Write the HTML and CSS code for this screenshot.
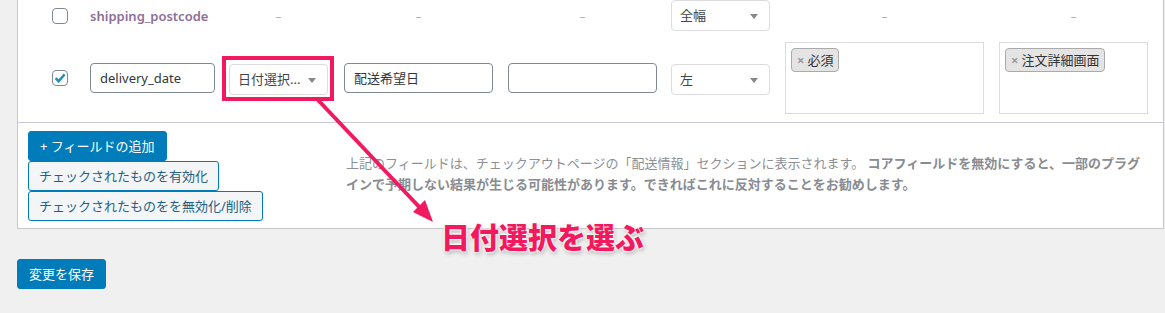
FILE: index.html
```html
<!DOCTYPE html>
<html lang="ja">
  <head>
    <meta charset="utf-8">
    <title>配送フィールド</title>
    <link rel="stylesheet" href="styles.css">
  </head>
  <body>

  <div class="wrap">
    <div class="panel">

      <div class="field-row first">
        <div class="cell-check"><span class="check"></span></div>
        <div class="cell"><span class="field-name">shipping_postcode</span></div>
        <div class="cell"><span class="dash w99">&ndash;</span></div>
        <div class="cell"><span class="dash w149">&ndash;</span></div>
        <div class="cell"><span class="dash w149">&ndash;</span></div>
        <div class="cell">
          <span class="select">全幅<i class="arrow"></i></span>
        </div>
        <div class="cell"><span class="dash w199">&ndash;</span></div>
        <div class="cell"><span class="dash w149">&ndash;</span></div>
      </div>

      <div class="field-row second">
        <div class="cell-check"><span class="check checked">
          <svg viewBox="0 0 16 16" width="16" height="16"><path d="M3.6 8.2 L6.6 11.2 L12.6 4.4" fill="none" stroke="#1e8cbe" stroke-width="2.4"/></svg>
        </span></div>
        <div class="cell"><span class="input w125">delivery_date</span></div>
        <div class="cell"><span class="select low">日付選択...<i class="arrow"></i></span></div>
        <div class="cell"><span class="input w149">配送希望日</span></div>
        <div class="cell"><span class="input w149"></span></div>
        <div class="cell"><span class="select low">左<i class="arrow"></i></span></div>
        <div class="cell">
          <div class="multi w199"><span class="tag"><b>&times;</b>必須</span></div>
        </div>
        <div class="cell">
          <div class="multi w149"><span class="tag"><b>&times;</b>注文詳細画面</span></div>
        </div>
      </div>

      <div class="panel-foot">
        <div class="actions">
          <span class="button primary">+ フィールドの追加</span>
          <span class="button">チェックされたものを有効化</span>
          <span class="button">チェックされたものをを無効化/削除</span>
        </div>
        <p class="note">上記のフィールドは、チェックアウトページの「配送情報」セクションに表示されます。 <strong>コアフィールドを無効にすると、一部のプラグ<br>インで予期しない結果が生じる可能性があります。できればこれに反対することをお勧めします。</strong></p>
      </div>

    </div>

    <span class="button primary save">変更を保存</span>
  </div>

  <!-- annotation -->
  <svg class="marks" width="1165" height="313" viewBox="0 0 1165 313">
    <rect x="224" y="58" width="108" height="41" fill="none" stroke="#f3195f" stroke-width="4"/>
    <line x1="318" y1="100" x2="424" y2="212" stroke="#f3195f" stroke-width="4"/>
    <polygon points="433,222 413,212 425,200" fill="#f3195f"/>
  </svg>
  <div class="callout">日付選択を選ぶ</div>

  </body>
</html>
```

FILE: styles.css
```css
html, body {
  margin: 0;
  padding: 0;
}
body {
  position: relative;
  width: 1165px;
  height: 313px;
  overflow: hidden;
  background: #f0f0f1;
  color: #32373c;
  font-family: "Noto Sans", "Noto Sans CJK JP", sans-serif;
  font-size: 13px;
}

.wrap {
  padding-left: 17px;
}

.panel {
  width: 1147px;
  box-sizing: border-box;
  background: #fff;
  border: 1px solid #c8c9cc;
  border-top: 0;
}

.field-row {
  display: grid;
  grid-template-columns: 72px 139px 115px 164px 163px 114px 214px 1fr;
  align-items: center;
}
.field-row.first {
  height: 31px;
  padding-bottom: 3px;
}
.field-row.second {
  padding: 8px 0;
  border-bottom: 1px solid #c8c9d4;
}

.cell-check {
  padding-left: 34px;
  display: flex;
}
.check {
  width: 16px;
  height: 16px;
  box-sizing: border-box;
  border: 1px solid #7e8993;
  border-radius: 4px;
  background: #fff;
  display: flex;
}
.check svg {
  margin: -1px;
}

.cell {
  display: flex;
}

.field-name {
  color: #8d6e97;
  font-weight: 600;
}

.dash {
  text-align: center;
  color: #a7aaad;
  font-size: 11px;
}
.w99 { width: 99px; }
.w125 { width: 125px; }
.w149 { width: 149px; }
.w199 { width: 199px; }

.input {
  height: 30px;
  box-sizing: border-box;
  border: 1px solid #7e8993;
  border-radius: 4px;
  padding: 0 9px;
  line-height: 28px;
  color: #32373c;
}

.select {
  position: relative;
  width: 99px;
  height: 31px;
  box-sizing: border-box;
  border: 1px solid #dcdcde;
  border-radius: 4px;
  padding: 0 8px;
  line-height: 29px;
  color: #444;
}
.select.low {
  margin-top: 2px;
}
.arrow {
  position: absolute;
  right: 11px;
  top: 13px;
  border: 4px solid transparent;
  border-top: 5px solid #888;
  border-bottom: 0;
}

.multi {
  height: 72px;
  box-sizing: border-box;
  border: 1px solid #dcdcde;
  padding: 5px;
}
.tag {
  display: inline-block;
  height: 24px;
  box-sizing: border-box;
  background: #e4e4e4;
  border: 1px solid #aaa;
  border-radius: 4px;
  padding: 0 5px;
  line-height: 22px;
  color: #333;
}
.tag b {
  color: #999;
  font-weight: bold;
  margin-right: 3px;
}

.panel-foot {
  display: flex;
  align-items: center;
  padding: 8px 10px 7px;
}
.actions {
  width: 318px;
  flex: none;
  display: flex;
  flex-direction: column;
  align-items: flex-start;
}
.note {
  margin: 0 0 5px;
  color: #8c8f94;
  line-height: 21px;
  white-space: nowrap;
}
.note strong {
  font-weight: 600;
  color: #888c92;
}

.button {
  display: inline-block;
  height: 30px;
  box-sizing: border-box;
  padding: 0 10px;
  line-height: 28px;
  border: 1px solid #007cba;
  border-radius: 3px;
  background: #f3f5f6;
  color: #255f82;
}
.button.primary {
  background: #007cba;
  color: #fff;
  padding: 0 11px;
}
.save {
  margin-top: 30px;
  padding: 0 10px;
}

.marks {
  position: absolute;
  left: 0;
  top: 0;
  pointer-events: none;
}
.callout {
  position: absolute;
  left: 441px;
  top: 219px;
  color: #f3195f;
  font-size: 29px;
  font-weight: 900;
  line-height: 38px;
  text-shadow: 0 0 2px #fff, 0 0 2px #fff, 0 0 3px #fff, 0 0 3px #fff, 1px 2px 4px rgba(0, 0, 0, 0.35);
}
```
